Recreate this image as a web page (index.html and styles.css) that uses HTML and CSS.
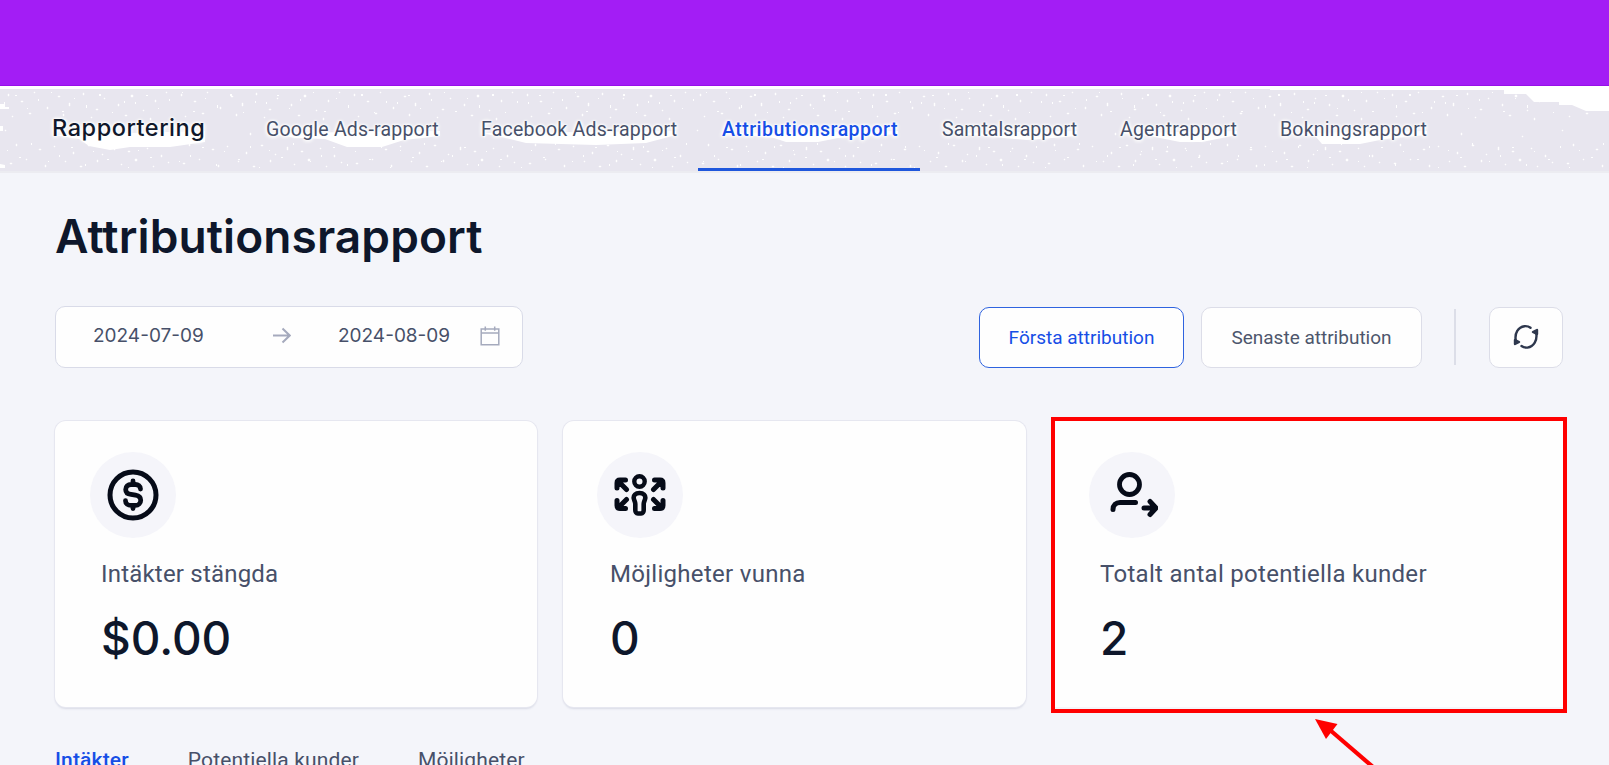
FILE: index.html
```
<!DOCTYPE html>
<html lang="sv">
<head>
  <meta charset="UTF-8">
  <meta name="viewport" content="width=device-width, initial-scale=1">
  <title>Attributionsrapport</title>
  <link rel="stylesheet" href="styles.css">
</head>
<body>
  <div class="banner"></div>

  <header class="topnav">
    <svg class="texture" viewBox="0 0 1609 82" aria-hidden="true">
      <defs>
        <pattern id="specks" width="173" height="82" patternUnits="userSpaceOnUse">
          <path fill="#fff" stroke="#fff" stroke-width=".4" d="M8 5h1v2h-1zM21 12h2v1h-2zM34 3h1v1h-1zM47 18h1v2h-1zM58 7h2v1h-2zM69 14h1v3h-1zM83 4h1v2h-1zM96 20h2v1h-2zM104 9h1v1h-1zM118 15h1v2h-1zM131 6h2v2h-2zM143 21h1v1h-1zM155 11h1v2h-1zM166 3h1v1h-1zM12 27h1v1h-1zM29 24h2v1h-2zM63 25h1v2h-1zM91 28h1v1h-1zM125 26h2v1h-2zM150 29h1v2h-1zM5 41h1v1h-1zM77 44h1v2h-1zM138 47h1v1h-1zM16 55h1v2h-1zM39 60h2v1h-2zM54 57h1v1h-1zM73 63h1v2h-1zM88 56h2v1h-2zM102 65h1v1h-1zM114 58h1v3h-1zM128 62h2v1h-2zM147 59h1v1h-1zM161 66h1v2h-1zM10 74h2v1h-2zM26 70h1v1h-1zM45 76h1v2h-1zM65 72h1v1h-1zM80 77h2v1h-2zM97 71h1v2h-1zM121 75h1v1h-1zM135 70h2v2h-2zM153 77h1v1h-1zM168 73h1v1h-1z"/>
        </pattern>
        <pattern id="dust" width="131" height="82" patternUnits="userSpaceOnUse">
          <path fill="#fff" d="M4 13h1v2h-1zM15 6h2v1h-2zM27 19h1v1h-1zM38 10h1v2h-1zM51 3h1v1h-1zM62 22h2v1h-2zM74 9h1v1h-1zM86 16h1v3h-1zM99 5h2v2h-2zM112 23h1v1h-1zM124 12h1v2h-1zM7 61h1v1h-1zM19 68h2v1h-2zM31 54h1v2h-1zM48 72h1v1h-1zM59 66h1v2h-1zM71 58h2v1h-2zM85 75h1v2h-1zM93 62h1v1h-1zM107 70h2v1h-2zM119 57h1v2h-1zM128 78h1v1h-1z"/>
        </pattern>
      </defs>
      <rect width="1609" height="82" fill="url(#specks)"/>
      <rect width="1609" height="82" fill="url(#dust)"/>
      <g fill="#fff">
        <path d="M0 15h5v3h4v2H0zM0 37h3v5H0zM0 75l5 1v3H0z"/>
        <path d="M1270 0v1h234v4h22l8 8h25v3h13l14 6h23V0z"/>
        <path d="M54 46l25 4 10 7 21 4 20-3h40l35-5V42z"/>
        <path d="M267 44l28 5 30 1 22 8h35l22-7 36-4V42z"/>
        <path d="M481 44l25 5 20 5 70 2 50-2 30-8V42z"/>
        <path d="M724 44l50 5 12 4h32l20-4 60-4V42z"/>
        <path d="M942 44l40 3 45 4 50-4V42z"/>
        <path d="M1120 44l30 3 30 6h22l35-7V42z"/>
        <path d="M1281 44l35 4 6 7h38l25-5 42-4V42z"/>
      </g>
    </svg>
    <div class="brand">Rapportering</div>
    <nav>
      <a class="google">Google Ads-rapport</a>
      <a class="facebook">Facebook Ads-rapport</a>
      <a class="active">Attributionsrapport</a>
      <a class="calls">Samtalsrapport</a>
      <a class="agent">Agentrapport</a>
      <a class="booking">Bokningsrapport</a>
    </nav>
  </header>

  <main>
    <h1>Attributionsrapport</h1>

    <div class="toolbar">
      <div class="daterange">
        <span class="date">2024-07-09</span>
        <svg class="arrow" width="18" height="17" viewBox="0 0 18 17"><path d="M0 8.5h17M9.5 1.5l7.2 7-7.2 7"/></svg>
        <span class="date">2024-08-09</span>
        <svg class="calendar" width="20" height="20" viewBox="0 0 20 20"><path d="M1.2 3h17.6v15.7H1.2zM1.2 7h17.6M5.3.5v4.2M14.7.5v4.2"/></svg>
      </div>
      <div class="actions">
        <button class="btn first">Första attribution</button>
        <button class="btn last">Senaste attribution</button>
        <span class="divider"></span>
        <button class="btn refresh" aria-label="Uppdatera">
          <svg width="26" height="26" viewBox="0 0 26 26">
            <path d="M3 17.500C1 9 5.500 3 11.500 2.200q3.500-.3 6 1.600M23 8c2 8.500-2.500 14.700-8.500 15.600q-3.500.3-6-1.600"/>
            <path class="tip" d="M2 16v4l4-2zM24 10V6l-4 2z"/>
          </svg>
        </button>
      </div>
    </div>

    <div class="cards">
      <div class="card">
        <div class="icon">
          <svg width="52" height="52" viewBox="0 0 52 52">
            <circle cx="26" cy="26" r="23" stroke-width="5"/>
            <path stroke-width="4.800" d="M33.500 20c0-3-2.500-4.500-5-4.500h-4.500c-3 0-5.300 2-5.300 4.900s2.300 4.600 5.300 5l4.500.8c3 .5 5.200 2.200 5.200 5s-2.200 5.200-5.200 5.200H24c-3 0-5.500-1.800-5.500-4.700M26 12v2.500M26 37v2.500"/>
          </svg>
        </div>
        <div class="label">Intäkter stängda</div>
        <div class="value">$0.00</div>
      </div>

      <div class="card won">
        <div class="icon">
          <svg width="52" height="52" viewBox="0 0 52 52">
            <circle cx="25.500" cy="12.500" r="5.200" stroke-width="4.400"/>
            <path stroke-width="4.600" d="M25.500 24c-4 0-6.300 2.300-5.700 5.500.3 2 1.500 3.500 1.500 5.500v6c0 2 1 3.500 2.500 3.500h3.400c1.500 0 2.500-1.500 2.500-3.500v-6c0-2 1.200-3.500 1.500-5.500.6-3.200-1.700-5.500-5.700-5.500z"/>
            <path stroke-width="5" d="M12.500 20.500L5 13M3 19v-5q0-3 3-3h5.500M39.500 20.500l7.500-7.500M49 19v-5q0-3-3-3h-5.500M12.500 30.500L5 38M3 31.500v5q0 3 3 3h5.500M39.500 30.500l7.500 7.500M49 31.500v5q0 3-3 3h-5.500"/>
          </svg>
        </div>
        <div class="label">Möjligheter vunna</div>
        <div class="value">0</div>
      </div>

      <div class="card marked">
        <div class="icon">
          <svg width="52" height="52" viewBox="0 0 52 52">
            <circle cx="23.500" cy="15.500" r="10" stroke-width="4.800"/>
            <path stroke-width="5" d="M7 40.500c0-4.500 3-7 7-7h15.500M38 39h11M44 32.500l6 6.500-6 6.500"/>
          </svg>
        </div>
        <div class="label">Totalt antal potentiella kunder</div>
        <div class="value">2</div>
        <svg class="pointer" width="62" height="48" viewBox="0 0 62 48">
          <path d="M0 0l22.500 5-11.500 15z" fill="#ff0000"/>
          <path d="M15 11l43 37" stroke="#ff0000" stroke-width="4.200"/>
        </svg>
      </div>
    </div>

    <div class="tabs">
      <a class="selected">Intäkter</a>
      <a>Potentiella kunder</a>
      <a>Möjligheter</a>
    </div>
  </main>
</body>
</html>
```
FILE: styles.css
```
* {
  box-sizing: border-box;
}

body {
  margin: 0;
  height: 765px;
  overflow: hidden;
  background: #f4f5fa;
  color: #475069;
  font-family: Roboto, "Liberation Sans", sans-serif;
}

svg {
  display: block;
  fill: none;
}

.banner {
  height: 86px;
  background: #a31df5;
  border-bottom: 1px solid #9710e8;
}

.topnav {
  position: relative;
  display: flex;
  height: 87px;
  padding-left: 52px;
  background: #e8e6ef;
  border-top: 3px solid #fff;
  border-bottom: 2px solid #ececf1;
  text-shadow: 0 0 2px #fff, 0 0 3px #fff, 0 0 4px #fff, 1px 1px 4px #fff, -1px 1px 4px #fff;
}

.texture {
  position: absolute;
  left: 0;
  top: 0;
  width: 1609px;
  height: 82px;
}

.brand {
  position: relative;
  width: 214px;
  font: 540 23.500px/78px Inter, sans-serif;
  letter-spacing: 0.55px;
  color: #10182b;
}

nav {
  position: relative;
  display: flex;
  font-size: 19.500px;
  line-height: 82px;
  letter-spacing: 0.22px;
  white-space: nowrap;
}

nav a {
  height: 82px;
}

.google {
  width: 215px;
}

.facebook {
  width: 217px;
}

nav .active {
  width: 222px;
  padding-left: 24px;
  margin-right: 22px;
  border-bottom: 3px solid #1f57dc;
  color: #164ee6;
  font-weight: 500;
  letter-spacing: 0.48px;
}

.calls {
  width: 178px;
  letter-spacing: 0.05px;
}

.agent {
  width: 160px;
}

main {
  padding: 32px 42px 0 55px;
}

h1 {
  margin: 0;
  font: 570 46px/62px Inter, sans-serif;
  letter-spacing: 0.1px;
  color: #0e172b;
}

.toolbar {
  display: flex;
  justify-content: space-between;
  margin-top: 39px;
  padding-right: 4px;
}

.daterange {
  display: flex;
  align-items: center;
  width: 468px;
  height: 62px;
  padding: 0 22px 3px 37px;
  background: #fefefe;
  border: 1px solid #d9dbe8;
  border-radius: 10px;
}

.date {
  flex: none;
  width: 112px;
  font: 400 19px Inter, sans-serif;
  white-space: nowrap;
}

.arrow {
  flex: none;
  margin: 0 47px 0 68px;
  stroke: #a5aabd;
  stroke-width: 2;
}

.calendar {
  flex: none;
  margin-left: auto;
  stroke: #a5aabd;
  stroke-width: 1.500;
}

.actions {
  display: flex;
  align-items: center;
}

.btn {
  display: flex;
  align-items: center;
  justify-content: center;
  height: 61px;
  padding: 0;
  background: #fefefe;
  border: 1px solid #dcdde8;
  border-radius: 10px;
  color: #4d566c;
  font: 400 19px Roboto, sans-serif;
}

.first {
  width: 205px;
  margin-right: 17px;
  border-color: #2f63df;
  color: #164ee6;
}

.last {
  width: 221px;
}

.divider {
  width: 2px;
  height: 56px;
  margin: 0 33px 0 32px;
  background: #dcdee8;
}

.refresh {
  width: 74px;
}

.refresh svg {
  stroke: #2d374d;
  stroke-width: 2.400;
  stroke-linejoin: round;
  stroke-linecap: round;
}

.refresh .tip {
  fill: #2d374d;
}

.cards {
  display: grid;
  grid-template-columns: 482px 463px 511px;
  gap: 26px;
  margin-top: 53px;
}

.card {
  position: relative;
  height: 286px;
  padding: 31px 35px 0;
  background: #fefefe;
  border-radius: 11px;
  box-shadow: 0 0 0 1px #e6e7f0, 0 2px 2px #d9dbe6;
}

.icon {
  display: flex;
  align-items: center;
  justify-content: center;
  width: 86px;
  height: 86px;
  border-radius: 50%;
  background: #f5f5fa;
}

.icon svg {
  stroke: #060b18;
  stroke-linecap: round;
  stroke-linejoin: round;
}

.label {
  margin: 19px 0 0 11px;
  font-size: 24px;
  line-height: 34px;
  letter-spacing: 0.2px;
  white-space: nowrap;
}

.value {
  margin: 17px 0 0 11px;
  font: 500 46px/60px Inter, sans-serif;
  color: #0e172b;
}

.won .icon {
  margin-left: -1px;
}

.won .label {
  margin-left: 12px;
  letter-spacing: 0.3px;
}

.won .value {
  margin-left: 12px;
}

.marked {
  padding-left: 37px;
  border-radius: 0;
  box-shadow: none;
}

.marked::before {
  content: "";
  position: absolute;
  inset: -4px -4px -6px -1px;
  border: 4px solid #ff0000;
}

.marked .label {
  letter-spacing: 0.3px;
}

.pointer {
  position: absolute;
  left: 263px;
  top: 298px;
}

.tabs {
  display: flex;
  gap: 59px;
  margin-top: 39px;
  font-size: 21px;
  line-height: 28px;
  letter-spacing: 0.15px;
}

.selected {
  color: #164ee6;
  font-weight: 500;
}
```
